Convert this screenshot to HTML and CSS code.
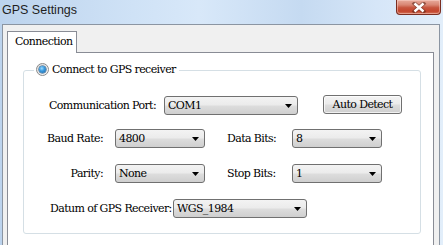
FILE: index.html
```html
<!DOCTYPE html>
<html>
<head>
<meta charset="utf-8">
<title>GPS Settings</title>
<link rel="stylesheet" href="styles.css">
</head>
<body>
<div class="window">
  <div class="titlebar">
    <span class="title">GPS Settings</span>
    <div class="close">
      <svg width="16" height="11" viewBox="0 0 16 11"><path d="M3.5 1.5 L12.5 9.5 M12.5 1.5 L3.5 9.5" stroke="#5a2418" stroke-width="4" stroke-linecap="square" opacity="0.55"/><path d="M3.5 1.5 L12.5 9.5 M12.5 1.5 L3.5 9.5" stroke="#ffffff" stroke-width="2.4"/></svg>
    </div>
  </div>
  <div class="client">
    <div class="tabs"><div class="tab">Connection</div></div>
    <div class="panel">
      <fieldset class="group">
        <legend class="legend"><span class="radio"><span class="dot"></span></span><span class="legend-text">Connect to GPS receiver</span></legend>
        <div class="row row1">
          <span class="label lbl-port">Communication Port:</span>
          <div class="combo wide"><span>COM1</span><svg class="arrow" width="7" height="4" viewBox="0 0 7 4"><polygon points="0,0 7,0 3.5,4" fill="#000"/></svg></div>
          <div class="btn">Auto Detect</div>
        </div>
        <div class="row row2">
          <span class="label lbl-left">Baud Rate:</span>
          <div class="combo narrow"><span>4800</span><svg class="arrow" width="7" height="4" viewBox="0 0 7 4"><polygon points="0,0 7,0 3.5,4" fill="#000"/></svg></div>
          <span class="label lbl-right">Data Bits:</span>
          <div class="combo narrow"><span>8</span><svg class="arrow" width="7" height="4" viewBox="0 0 7 4"><polygon points="0,0 7,0 3.5,4" fill="#000"/></svg></div>
        </div>
        <div class="row row3">
          <span class="label lbl-left">Parity:</span>
          <div class="combo narrow"><span>None</span><svg class="arrow" width="7" height="4" viewBox="0 0 7 4"><polygon points="0,0 7,0 3.5,4" fill="#000"/></svg></div>
          <span class="label lbl-right">Stop Bits:</span>
          <div class="combo narrow"><span>1</span><svg class="arrow" width="7" height="4" viewBox="0 0 7 4"><polygon points="0,0 7,0 3.5,4" fill="#000"/></svg></div>
        </div>
        <div class="row row4">
          <span class="label lbl-datum">Datum of GPS Receiver:</span>
          <div class="combo wide"><span>WGS_1984</span><svg class="arrow" width="7" height="4" viewBox="0 0 7 4"><polygon points="0,0 7,0 3.5,4" fill="#000"/></svg></div>
        </div>
      </fieldset>
    </div>
  </div>
</div>
</body>
</html>
```
FILE: styles.css
```css
* { box-sizing: border-box; }
html, body { margin: 0; padding: 0; }
body {
  width: 443px;
  height: 245px;
  overflow: hidden;
  font-family: "DejaVu Serif", serif;
  font-size: 11px;
  letter-spacing: -0.6px;
  color: #000;
}
.window {
  width: 443px;
  height: 245px;
  padding: 0 3px 0 2px;
  display: flex;
  flex-direction: column;
  background: linear-gradient(90deg, #bcd3ed 0%, #cfe2f6 30%, #d8e8f9 45%, #c5daf1 68%, #d6e6f8 85%, #e2eefa 100%);
}
.titlebar {
  height: 24px;
  flex: none;
  display: flex;
  justify-content: space-between;
  align-items: flex-start;
}
.title {
  font-family: "Liberation Sans", Arial, sans-serif;
  font-size: 12.5px;
  letter-spacing: 0;
  line-height: 20px;
  color: #1e1e1e;
}
.close {
  width: 45px;
  height: 15px;
  margin-right: -1px;
  border: 1px solid #7a2d20;
  border-top: none;
  border-radius: 0 0 4px 4px;
  background: linear-gradient(#e8ab9c 0%, #d98673 35%, #c7553e 55%, #c4452d 80%, #d3755c 100%);
  box-shadow: inset 0 0 0 1px rgba(255, 220, 210, 0.45);
  display: flex;
  justify-content: center;
  align-items: center;
}
.close svg { display: block; }
.client {
  flex: 1;
  background: #f0f0f0;
  border: 1px solid #8b95a2;
  border-bottom: none;
  padding: 6px 5px 0 4px;
  display: flex;
  flex-direction: column;
}
.tabs { display: flex; flex: none; }
.tab {
  position: relative;
  z-index: 1;
  width: 70px;
  height: 22px;
  margin-bottom: -1px;
  border: 1px solid #898c95;
  border-bottom: none;
  background: #fff;
  padding-left: 7px;
  line-height: 20px;
}
.panel {
  flex: 1;
  background: #fff;
  border: 1px solid #898c95;
  border-bottom: none;
  padding: 10px 0 0 15px;
}
.group {
  width: 398px;
  height: 171px;
  margin: 0;
  padding: 0;
  border: 1px solid #d5dfe5;
  border-radius: 3px;
  min-width: 0;
}
.legend {
  margin-left: 10px;
  padding: 0 3px 0 2px;
  height: 14px;
  line-height: 14px;
}
.radio {
  display: inline-block;
  vertical-align: top;
  width: 13px;
  height: 13px;
  margin-right: 3px;
  border-radius: 50%;
  border: 1px solid #8a8a8a;
  background: linear-gradient(135deg, #dcdcdc, #fbfbfb);
  position: relative;
}
.dot {
  position: absolute;
  left: 2px;
  top: 2px;
  width: 7px;
  height: 7px;
  border-radius: 50%;
  background: radial-gradient(circle at 40% 35%, #9fdcff 0%, #3b9be0 40%, #1a5f9c 100%);
  box-shadow: 0 0 0 0.5px #1d4f7a;
}
.row { display: flex; align-items: center; height: 19px; }
.row1 { margin-top: 19px; padding-left: 25px; }
.row2 { margin-top: 14px; padding-left: 19px; }
.row3 { margin-top: 16px; padding-left: 19px; }
.row4 { margin-top: 16px; padding-left: 26px; }
.label { white-space: nowrap; }
.lbl-port { width: 115px; }
.lbl-left { width: 60px; text-align: right; margin-right: 12px; }
.lbl-right { width: 65px; margin-left: 22px; }
.lbl-datum { width: 123px; }
.combo {
  height: 19px;
  border: 1px solid #707070;
  border-radius: 3px;
  background: linear-gradient(#f3f3f3 0%, #ebebeb 48%, #dddddd 52%, #cfcfcf 100%);
  display: flex;
  align-items: center;
  justify-content: space-between;
  padding: 0 5px 0 3px;
  white-space: nowrap;
}
.combo.wide { width: 134px; }
.combo.narrow { width: 90px; }
.arrow { display: block; flex: none; }
.btn {
  width: 79px;
  height: 19px;
  margin-left: 25px;
  margin-top: -2px;
  border: 1px solid #707070;
  border-radius: 3px;
  background: linear-gradient(#f3f3f3 0%, #ebebeb 48%, #dddddd 52%, #cfcfcf 100%);
  box-shadow: inset 0 0 0 1px rgba(255, 255, 255, 0.7);
  text-align: center;
  line-height: 17px;
}
```
